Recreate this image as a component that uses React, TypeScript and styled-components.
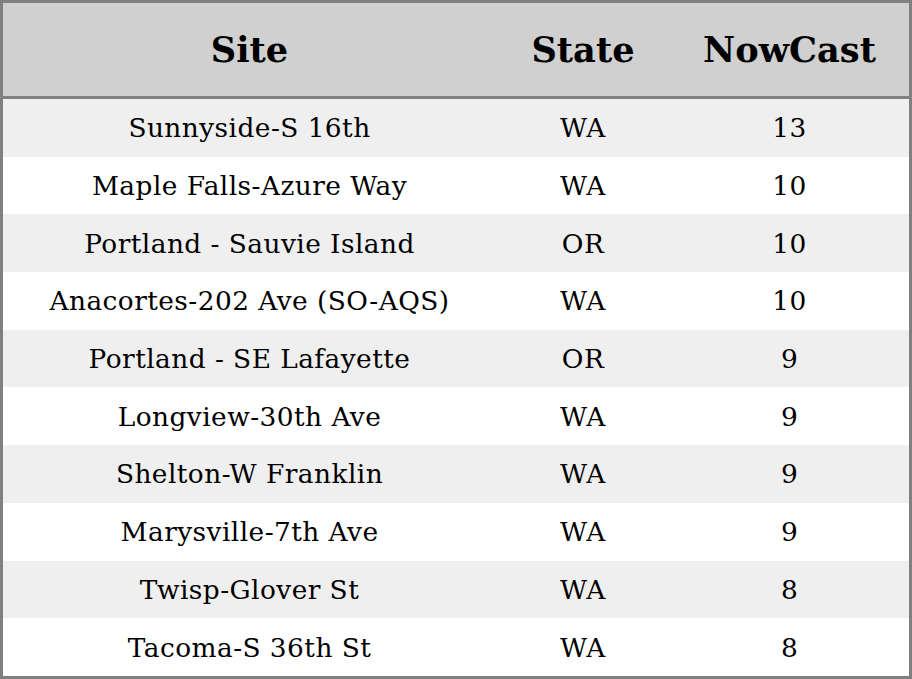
import React from "react";
import styled, { createGlobalStyle } from "styled-components";

const GlobalStyle = createGlobalStyle`
  html, body {
    margin: 0;
    padding: 0;
    background: #ffffff;
  }
`;

const Table = styled.table`
  width: 912px;
  border-collapse: separate;
  border-spacing: 0;
  border: 3px solid #808080;
  box-sizing: border-box;
  font-family: "DejaVu Serif", "Liberation Serif", serif;
  color: #000;
`;

const HeadCell = styled.th<{ $w: number }>`
  width: ${(p) => p.$w}px;
  height: 93px;
  padding: 0;
  background: #d0d0d0;
  border-bottom: 3px solid #808080;
  font-size: 35.2px;
  font-weight: bold;
  text-align: center;
  vertical-align: middle;
`;

const Row = styled.tr<{ $odd: boolean }>`
  height: 57.7px;
  background: ${(p) => (p.$odd ? "#efefef" : "#ffffff")};
`;

const Cell = styled.td`
  padding: 0;
  font-size: 26.4px;
  text-align: center;
  vertical-align: middle;
  letter-spacing: 0.45px;
`;

const rows: [string, string, number][] = [
  ["Sunnyside-S 16th", "WA", 13],
  ["Maple Falls-Azure Way", "WA", 10],
  ["Portland - Sauvie Island", "OR", 10],
  ["Anacortes-202 Ave (SO-AQS)", "WA", 10],
  ["Portland - SE Lafayette", "OR", 9],
  ["Longview-30th Ave", "WA", 9],
  ["Shelton-W Franklin", "WA", 9],
  ["Marysville-7th Ave", "WA", 9],
  ["Twisp-Glover St", "WA", 8],
  ["Tacoma-S 36th St", "WA", 8],
];

export default function App() {
  return (
    <>
      <GlobalStyle />
      <Table>
        <thead>
          <tr>
            <HeadCell $w={493}>Site</HeadCell>
            <HeadCell $w={174}>State</HeadCell>
            <HeadCell $w={239}>NowCast</HeadCell>
          </tr>
        </thead>
        <tbody>
          {rows.map(([site, state, val], i) => (
            <Row key={site} $odd={i % 2 === 0}>
              <Cell>{site}</Cell>
              <Cell>{state}</Cell>
              <Cell>{val}</Cell>
            </Row>
          ))}
        </tbody>
      </Table>
    </>
  );
}
